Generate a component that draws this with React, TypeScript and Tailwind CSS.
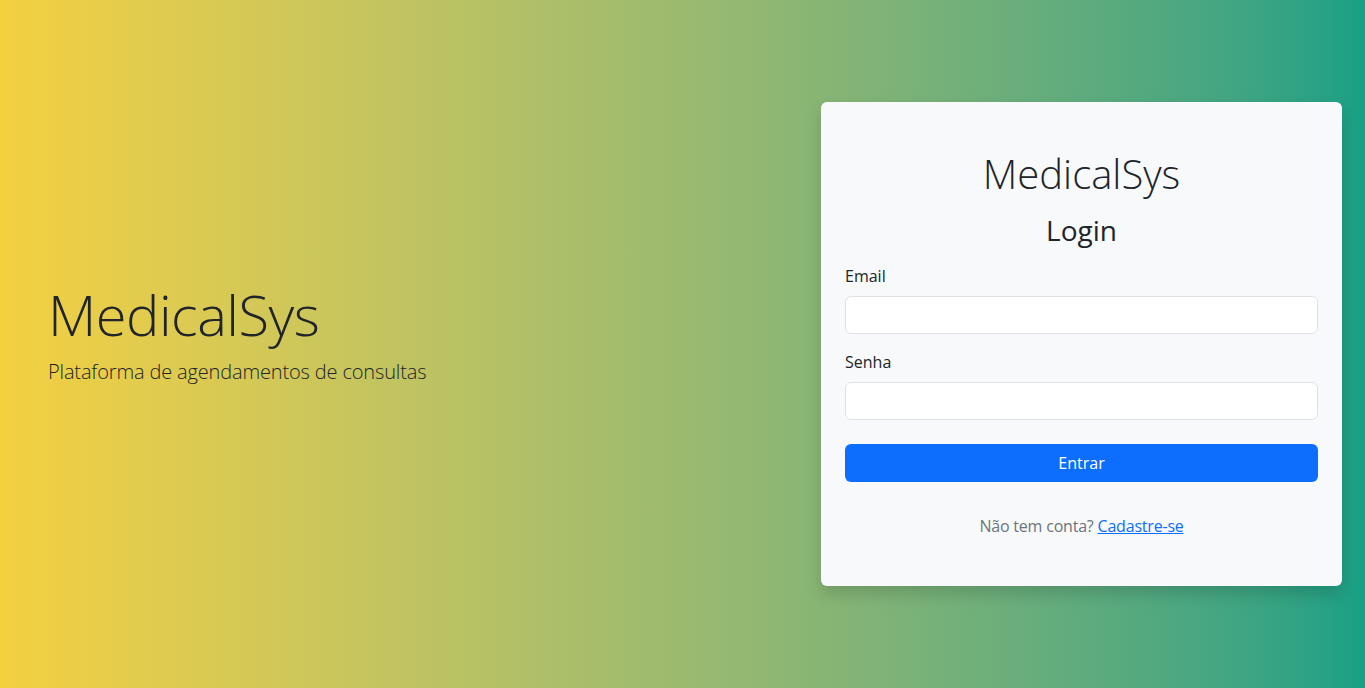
import React, { useState } from "react";

export default function App() {
  const [email, setEmail] = useState("");
  const [senha, setSenha] = useState("");

  return (
    <div
      className="h-[688px] w-full flex items-center bg-gradient-to-r from-[#f4d03f] to-[#16a085] text-[#212529]"
      style={{ fontFamily: '"Open Sans", "Noto Sans", sans-serif' }}
    >
      {/* HERO */}
      <div className="flex-1 pl-12 pb-5">
        <h1 className="text-[56px] leading-[1.2] font-light tracking-[-0.5px]">MedicalSys</h1>
        <p className="mt-2 text-[20px] leading-[1.5] font-light tracking-[-0.15px]">Plataforma de agendamentos de consultas</p>
      </div>

      {/* LOGIN CARD */}
      <div className="w-[521px] mr-[23px] bg-[#f8f9fa] rounded-md shadow-[0_0.5rem_1rem_rgba(0,0,0,0.15)] px-6 py-12">
        <h2 className="text-[40px] leading-[1.2] font-light text-center mb-4">MedicalSys</h2>
        <h3 className="text-[28px] leading-[1.2] font-medium text-center mb-4">Login</h3>

        <label className="block text-base leading-6 mb-2">Email</label>
        <input
          type="email"
          value={email}
          onChange={(e) => setEmail(e.target.value)}
          className="block w-full h-[38px] px-3 bg-white border border-[#dee2e6] rounded-md outline-none mb-4"
        />

        <label className="block text-base leading-6 mb-2">Senha</label>
        <input
          type="password"
          value={senha}
          onChange={(e) => setSenha(e.target.value)}
          className="block w-full h-[38px] px-3 bg-white border border-[#dee2e6] rounded-md outline-none mb-6"
        />

        <button className="block w-full h-[38px] bg-[#0d6efd] text-white text-base rounded-md">Entrar</button>

        <p className="mt-8 text-center text-base leading-6 text-[#6c757d] tracking-[-0.2px]">
          Não tem conta?{" "}
          <a href="#" className="text-[#0d6efd] underline">
            Cadastre-se
          </a>
        </p>
      </div>
    </div>
  );
}
